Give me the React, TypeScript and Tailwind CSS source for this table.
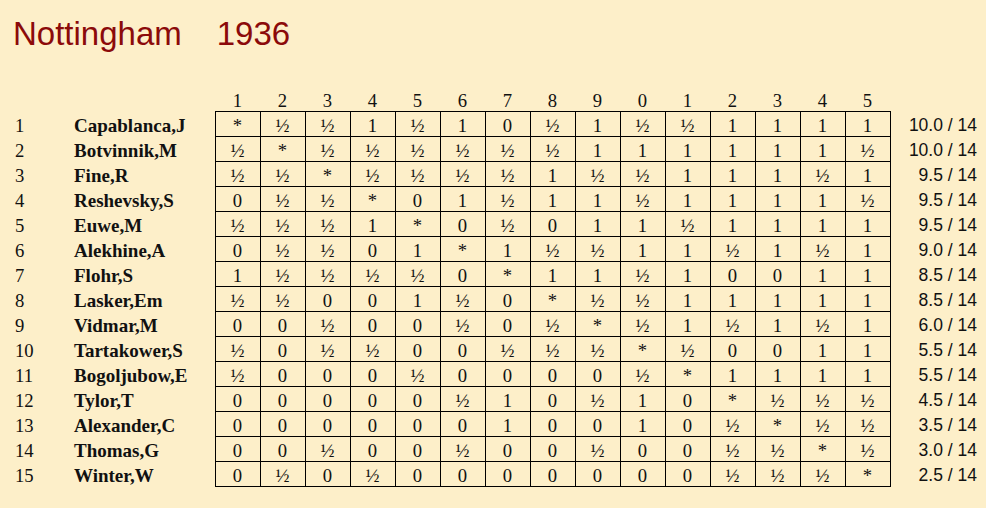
import React from 'react';

type Player = { name: string; results: string[]; score: string };

const players: Player[] = [
    { name: 'Capablanca,J', results: '* ½ ½ 1 ½ 1 0 ½ 1 ½ ½ 1 1 1 1'.split(' '), score: '10.0 / 14' },
    { name: 'Botvinnik,M', results: '½ * ½ ½ ½ ½ ½ ½ 1 1 1 1 1 1 ½'.split(' '), score: '10.0 / 14' },
    { name: 'Fine,R', results: '½ ½ * ½ ½ ½ ½ 1 ½ ½ 1 1 1 ½ 1'.split(' '), score: '9.5 / 14' },
    { name: 'Reshevsky,S', results: '0 ½ ½ * 0 1 ½ 1 1 ½ 1 1 1 1 ½'.split(' '), score: '9.5 / 14' },
    { name: 'Euwe,M', results: '½ ½ ½ 1 * 0 ½ 0 1 1 ½ 1 1 1 1'.split(' '), score: '9.5 / 14' },
    { name: 'Alekhine,A', results: '0 ½ ½ 0 1 * 1 ½ ½ 1 1 ½ 1 ½ 1'.split(' '), score: '9.0 / 14' },
    { name: 'Flohr,S', results: '1 ½ ½ ½ ½ 0 * 1 1 ½ 1 0 0 1 1'.split(' '), score: '8.5 / 14' },
    { name: 'Lasker,Em', results: '½ ½ 0 0 1 ½ 0 * ½ ½ 1 1 1 1 1'.split(' '), score: '8.5 / 14' },
    { name: 'Vidmar,M', results: '0 0 ½ 0 0 ½ 0 ½ * ½ 1 ½ 1 ½ 1'.split(' '), score: '6.0 / 14' },
    { name: 'Tartakower,S', results: '½ 0 ½ ½ 0 0 ½ ½ ½ * ½ 0 0 1 1'.split(' '), score: '5.5 / 14' },
    { name: 'Bogoljubow,E', results: '½ 0 0 0 ½ 0 0 0 0 ½ * 1 1 1 1'.split(' '), score: '5.5 / 14' },
    { name: 'Tylor,T', results: '0 0 0 0 0 ½ 1 0 ½ 1 0 * ½ ½ ½'.split(' '), score: '4.5 / 14' },
    { name: 'Alexander,C', results: '0 0 0 0 0 0 1 0 0 1 0 ½ * ½ ½'.split(' '), score: '3.5 / 14' },
    { name: 'Thomas,G', results: '0 0 ½ 0 0 ½ 0 0 ½ 0 0 ½ ½ * ½'.split(' '), score: '3.0 / 14' },
    { name: 'Winter,W', results: '0 ½ 0 ½ 0 0 0 0 0 0 0 ½ ½ ½ *'.split(' '), score: '2.5 / 14' },
];

const headers = ['1', '2', '3', '4', '5', '6', '7', '8', '9', '0', '1', '2', '3', '4', '5'];

const App: React.FC = () => {
    return (
        <div className="min-h-[508px] w-full bg-[#fdefc9] text-[#111]">
            <h1 className="pl-[13px] pt-[15px] font-['Liberation_Sans',Arial,sans-serif] text-[33px] leading-[37px] text-[#8b0a0a]">
                Nottingham<span className="ml-[35px]">1936</span>
            </h1>

            {/* crosstable */}
            <table className="ml-[15px] mt-[38px] border-collapse font-['Liberation_Serif','Times_New_Roman',serif] text-[18.67px]">
                <thead>
                    <tr className="h-[21px] leading-[21px]">
                        <th className="w-[59px] p-0" />
                        <th className="w-[141px] p-0" />
                        {headers.map((h, i) => (
                            <th key={i} className="w-[45px] p-0 text-center font-normal">{h}</th>
                        ))}
                        <th className="w-[87px] p-0" />
                    </tr>
                </thead>
                <tbody>
                    {players.map((p, r) => (
                        <tr key={p.name} className="h-[25px] leading-[21px]">
                            <td className="p-0 pt-[3px] text-left align-top">{r + 1}</td>
                            <td className="p-0 pt-[3px] text-left align-top text-[19px] font-bold">{p.name}</td>
                            {p.results.map((res, c) => (
                                <td key={c} className="border border-black p-0 pt-[3px] text-center align-top">
                                    {res}
                                </td>
                            ))}
                            <td className="p-0 pt-[3px] text-right align-top font-['Liberation_Sans',Arial,sans-serif] text-[17.5px]">
                                {p.score}
                            </td>
                        </tr>
                    ))}
                </tbody>
            </table>
        </div>
    );
};

export default App;
